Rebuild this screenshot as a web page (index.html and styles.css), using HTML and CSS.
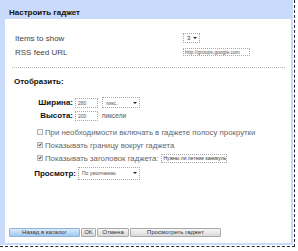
FILE: index.html
```html
<!DOCTYPE html>
<html lang="ru">
<head>
  <meta charset="UTF-8">
  <title>Настроить гаджет</title>
  <link rel="stylesheet" href="styles.css">
</head>
<body>
  <div class="gadget">
    <div class="panel">
      <div class="title">Настроить гаджет</div>
      <div class="content">
        <div class="settings">
          <div class="setting">
            <span class="setting-label">Items to show</span>
            <span class="select select-count">3</span>
          </div>
          <div class="setting">
            <span class="setting-label">RSS feed URL</span>
            <span class="field field-url">http://groups.google.com</span>
          </div>
        </div>
        <div class="separator"></div>
        <div class="section-title">Отобразить:</div>
        <div class="display">
          <div class="row">
            <span class="row-label">Ширина:</span>
            <span class="field field-num">280</span>
            <span class="select select-unit">пикс.</span>
          </div>
          <div class="row">
            <span class="row-label">Высота:</span>
            <span class="field field-num">200</span>
            <span class="unit">пиксели</span>
          </div>
          <div class="checks">
            <label class="check-row"><span class="check"></span>При необходимости включать в гаджете полосу прокрутки</label>
            <label class="check-row"><span class="check checked"></span>Показывать границу вокруг гаджета</label>
            <label class="check-row"><span class="check checked"></span>Показывать заголовок гаджета:<span class="field field-title">Нужны ли летние каникулы</span></label>
          </div>
          <div class="row row-preview">
            <span class="row-label">Просмотр:</span>
            <span class="select select-view">По умолчанию</span>
          </div>
        </div>
        <div class="buttons">
          <button class="btn btn-back">Назад в каталог</button>
          <button class="btn btn-ok">OK</button>
          <button class="btn btn-cancel">Отмена</button>
          <button class="btn btn-preview">Просмотреть гаджет</button>
        </div>
      </div>
    </div>
  </div>
</body>
</html>
```

FILE: styles.css
```css
body {
  margin: 0;
  background: #fff;
  font-family: "Liberation Sans", Arial, sans-serif;
  font-size: 8px;
  color: #444;
}
.gadget {
  width: 293px;
  height: 245px;
  padding: 0 1px 1px 0;
  border-right: 1px dashed #2a2a2a;
  border-bottom: 1px dashed #2a2a2a;
}
.panel {
  box-sizing: border-box;
  width: 293px;
  height: 245px;
  border-left: 5px solid #c9dafa;
  border-right: 2px solid #c9dafa;
  border-bottom: 2px solid #c9dafa;
  display: flex;
  flex-direction: column;
}
.title {
  height: 13px;
  padding: 6px 0 0 4px;
  line-height: 13px;
  background: #c9dafa;
  color: #111;
  font-weight: bold;
}
.content {
  flex: 1;
  display: flex;
  flex-direction: column;
  padding-top: 12px;
}
.setting {
  display: flex;
  align-items: center;
  height: 14px;
  padding-left: 10px;
}
.setting-label {
  width: 168px;
}
.select, .field {
  box-sizing: border-box;
  display: flex;
  align-items: center;
  border: 1px dotted #a8a8a8;
  background: #fff;
  color: #555;
  font-size: 5px;
  white-space: nowrap;
  overflow: hidden;
}
.select {
  justify-content: space-between;
  padding: 0 2px 0 3px;
}
.select::after {
  content: "";
  border-left: 2px solid transparent;
  border-right: 2px solid transparent;
  border-top: 2px solid #222;
}
.select-count {
  width: 17px;
  height: 10px;
  font-size: 6px;
  color: #333;
}
.field-url {
  width: 67px;
  height: 8px;
  padding-left: 1px;
}
.separator {
  margin: 8px 6px 0 7px;
  border-top: 1px dotted #b8b8b8;
}
.section-title {
  margin-top: 7px;
  height: 14px;
  line-height: 14px;
  padding-left: 9px;
  color: #111;
  font-weight: bold;
}
.display {
  margin-top: 7px;
}
.row {
  display: flex;
  align-items: center;
  height: 13px;
}
.row-label {
  box-sizing: border-box;
  width: 70px;
  padding-right: 2px;
  text-align: right;
  color: #111;
  font-weight: bold;
}
.field-num {
  width: 23px;
  height: 10px;
  padding-left: 2px;
  margin-right: 4px;
}
.select-unit {
  width: 38px;
  height: 11px;
}
.unit {
  color: #555;
  font-size: 6.5px;
}
.checks {
  display: flex;
  flex-direction: column;
  gap: 1px;
  margin-top: 4px;
  padding-left: 32px;
}
.check-row {
  display: flex;
  align-items: center;
  height: 12px;
  color: #666;
  font-size: 7.8px;
  white-space: nowrap;
}
.check {
  box-sizing: border-box;
  position: relative;
  width: 6px;
  height: 6px;
  margin-right: 2px;
  border: 1px solid #b4b4b4;
  background: #f4f4f4;
}
.check.checked::after {
  content: "";
  position: absolute;
  left: 1px;
  top: 0;
  width: 1px;
  height: 2px;
  border-right: 1px solid #555;
  border-bottom: 1px solid #555;
  transform: rotate(40deg);
}
.field-title {
  width: 66px;
  height: 9px;
  margin-left: 2px;
  padding-left: 2px;
  color: #333;
}
.row-preview {
  height: 14px;
  margin-top: 2px;
}
.row-preview .row-label {
  width: 73px;
}
.select-view {
  width: 62px;
  height: 13px;
  margin-left: 0;
}
.buttons {
  display: flex;
  gap: 1px;
  margin-top: auto;
  margin-bottom: 6px;
  padding-left: 4px;
}
.btn {
  box-sizing: border-box;
  height: 9px;
  padding: 0;
  border: 1px solid #a9a9a9;
  border-radius: 1px;
  background: linear-gradient(#f6f6f6, #d9d9d9);
  color: #333;
  font-family: "Liberation Sans", Arial, sans-serif;
  font-size: 6px;
  line-height: 7px;
}
.btn-back {
  width: 71px;
  border-color: #8fb2da;
  background: linear-gradient(#dcecff, #9fc8f0);
}
.btn-ok {
  width: 15px;
}
.btn-cancel {
  width: 32px;
}
.btn-preview {
  width: 91px;
}
```
